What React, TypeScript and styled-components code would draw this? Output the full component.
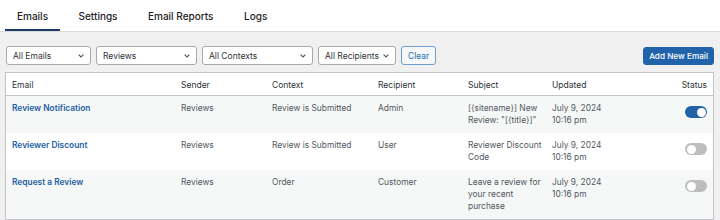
import styled, { createGlobalStyle } from "styled-components";

const GlobalStyle = createGlobalStyle`
  body {
    margin: 0;
    background: #f0f0f1;
    font-family: Inter, "Noto Sans", sans-serif;
    color: #1d2327;
  }
`;

const TabBar = styled.nav`
  display: flex;
  gap: 6.5px;
  height: 32px;
  padding-left: 5px;
  background: #fff;
  border-bottom: 1px solid #dcdcde;
  box-sizing: border-box;
`;

const Tab = styled.div<{ $active?: boolean }>`
  display: flex;
  align-items: center;
  padding: 2px 12px 0;
  font-size: 10px;
  font-weight: 500;
  color: #1d2327;
  border-bottom: 2px solid ${(p) => (p.$active ? "#1e3a66" : "transparent")};
`;

const Toolbar = styled.div`
  display: flex;
  align-items: center;
  gap: 5px;
  padding: 14px 6px 7px 6px;
`;

const Select = styled.div<{ $width?: number }>`
  display: flex;
  align-items: center;
  justify-content: space-between;
  gap: 4px;
  box-sizing: border-box;
  width: ${(p) => (p.$width ? `${p.$width}px` : "auto")};
  height: 19px;
  padding: 0 6px;
  background: #fff;
  border: 1px solid #a7aaad;
  border-radius: 3px;
  font-size: 8.5px;
  color: #2c3338;
`;

const Chevron = () => (
  <svg width="6" height="4" viewBox="0 0 6 4">
    <polyline
      points="0.6,0.6 3,3 5.4,0.6"
      fill="none"
      stroke="#50575e"
      strokeWidth="1.1"
    />
  </svg>
);

const ClearButton = styled.button`
  height: 19px;
  padding: 0 6px;
  background: #f6f7f7;
  border: 1px solid #6d9ccf;
  border-radius: 3px;
  font-family: inherit;
  font-size: 8.5px;
  color: #2271b1;
`;

const PrimaryButton = styled.button`
  margin-left: auto;
  height: 18px;
  padding: 0 5px;
  background: #2163ab;
  border: 1px solid #2163ab;
  border-radius: 3px;
  font-family: inherit;
  font-size: 8.2px;
  font-weight: 500;
  color: #fff;
`;

const Table = styled.div`
  margin: 0 6px 0 5px;
  background: #fff;
  border: 1px solid #c3c4c7;
`;

const columns = "169px 91px 106px 90px 84px 94px 1fr";

const HeadRow = styled.div`
  display: grid;
  grid-template-columns: ${columns};
  align-items: center;
  height: 23px;
  padding-top: 1px;
  border-bottom: 1px solid #c3c4c7;
  box-sizing: border-box;
  font-size: 8.5px;
  color: #2c3338;
`;

const Row = styled.div<{ $striped?: boolean }>`
  display: grid;
  grid-template-columns: ${columns};
  align-items: start;
  padding: 6px 0 7px;
  background: ${(p) => (p.$striped ? "#f6f7f7" : "#fff")};
  font-size: 8.4px;
  line-height: 12px;
  color: #50575e;
`;

const Cell = styled.div<{ $right?: boolean; $tight?: boolean }>`
  padding: 0 ${(p) => (p.$tight ? "0" : "6px")} 0 6px;
  text-align: ${(p) => (p.$right ? "right" : "left")};
  display: ${(p) => (p.$right ? "flex" : "block")};
  justify-content: flex-end;
`;

const EmailLink = styled.a`
  font-weight: 600;
  color: #2160a3;
  text-decoration: none;
`;

const Toggle = styled.span<{ $on?: boolean }>`
  position: relative;
  display: block;
  width: 22px;
  height: 12px;
  margin-top: 4px;
  border-radius: 6px;
  background: ${(p) => (p.$on ? "#2163ab" : "#bdbdbf")};

  &::after {
    content: "";
    position: absolute;
    top: 1.5px;
    left: ${(p) => (p.$on ? "11.5px" : "1.5px")};
    width: 9px;
    height: 9px;
    border-radius: 50%;
    background: #fff;
  }
`;

type Email = {
  name: string;
  sender: string;
  context: string;
  recipient: string;
  subject: string;
  date: string;
  time: string;
  active: boolean;
};

const emails: Email[] = [
  {
    name: "Review Notification",
    sender: "Reviews",
    context: "Review is Submitted",
    recipient: "Admin",
    subject: '[{sitename}] New Review: "[{title}]"',
    date: "July 9, 2024",
    time: "10:16 pm",
    active: true,
  },
  {
    name: "Reviewer Discount",
    sender: "Reviews",
    context: "Review is Submitted",
    recipient: "User",
    subject: "Reviewer Discount Code",
    date: "July 9, 2024",
    time: "10:16 pm",
    active: false,
  },
  {
    name: "Request a Review",
    sender: "Reviews",
    context: "Order",
    recipient: "Customer",
    subject: "Leave a review for your recent purchase",
    date: "July 9, 2024",
    time: "10:16 pm",
    active: false,
  },
];

export default function App() {
  return (
    <>
      <GlobalStyle />
      <TabBar>
        <Tab $active>Emails</Tab>
        <Tab>Settings</Tab>
        <Tab>Email Reports</Tab>
        <Tab>Logs</Tab>
      </TabBar>
      <Toolbar>
        <Select $width={85}>
          All Emails <Chevron />
        </Select>
        <Select $width={101}>
          Reviews <Chevron />
        </Select>
        <Select $width={111}>
          All Contexts <Chevron />
        </Select>
        <Select>
          All Recipients <Chevron />
        </Select>
        <ClearButton>Clear</ClearButton>
        <PrimaryButton>Add New Email</PrimaryButton>
      </Toolbar>
      <Table>
        <HeadRow>
          <Cell>Email</Cell>
          <Cell>Sender</Cell>
          <Cell>Context</Cell>
          <Cell>Recipient</Cell>
          <Cell>Subject</Cell>
          <Cell>Updated</Cell>
          <Cell $right>Status</Cell>
        </HeadRow>
        {emails.map((e, i) => (
          <Row key={e.name} $striped={i % 2 === 0}>
            <Cell>
              <EmailLink href="#">{e.name}</EmailLink>
            </Cell>
            <Cell>{e.sender}</Cell>
            <Cell>{e.context}</Cell>
            <Cell>{e.recipient}</Cell>
            <Cell $tight>{e.subject}</Cell>
            <Cell>
              {e.date}
              <br />
              {e.time}
            </Cell>
            <Cell $right>
              <Toggle $on={e.active} />
            </Cell>
          </Row>
        ))}
      </Table>
    </>
  );
}
